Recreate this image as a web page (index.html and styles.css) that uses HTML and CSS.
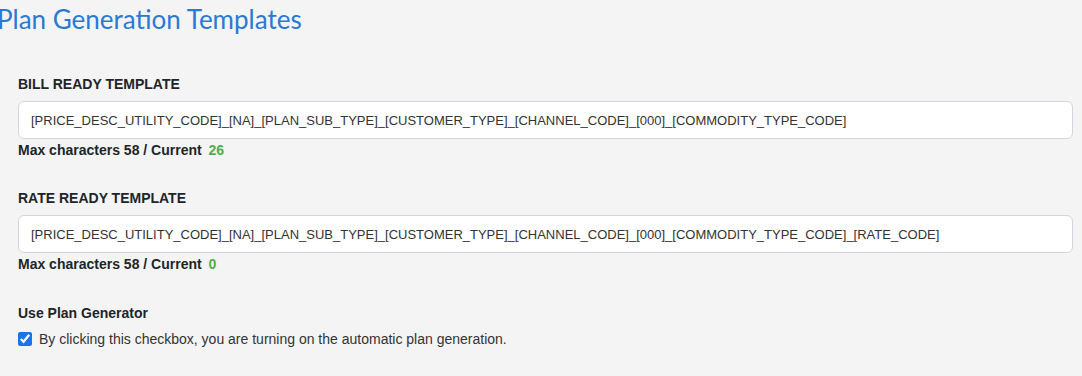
FILE: index.html
```html
<html>
<head>
<link rel="stylesheet" href="styles.css">
<meta http-equiv="Content-Type" content="text/html; charset=UTF-8">
<title>Plan Generation Templates</title>
</head>
<body>
	<div class="page">
		<h1 class="title">Plan Generation Templates</h1>

		<div class="field">
			<label class="caps">BILL READY TEMPLATE</label>
			<input class="tpl" type="text" value="[PRICE_DESC_UTILITY_CODE]_[NA]_[PLAN_SUB_TYPE]_[CUSTOMER_TYPE]_[CHANNEL_CODE]_[000]_[COMMODITY_TYPE_CODE]">
			<div class="count">Max characters 58 / Current <span class="num">26</span></div>
		</div>

		<div class="field second">
			<label class="caps">RATE READY TEMPLATE</label>
			<input class="tpl" type="text" value="[PRICE_DESC_UTILITY_CODE]_[NA]_[PLAN_SUB_TYPE]_[CUSTOMER_TYPE]_[CHANNEL_CODE]_[000]_[COMMODITY_TYPE_CODE]_[RATE_CODE]">
			<div class="count">Max characters 58 / Current <span class="num">0</span></div>
		</div>

		<div class="field last">
			<label class="caps plain">Use Plan Generator</label>
			<label class="check">
				<input type="checkbox" checked>
				<span>By clicking this checkbox, you are turning on the automatic plan generation.</span>
			</label>
		</div>
	</div>
</body>
</html>
```

FILE: styles.css
```css
body {
	margin:0;
	padding:0;
	background-color:#F4F4F4;
	font-family: "Liberation Sans", Arial, sans-serif;
	font-size:14px;
	color:#212529;
}

div.page {
	padding: 0 9px 0 18px;
}

h1.title {
	margin: 0 0 0 -21px;
	padding-top: 4px;
	font-family: Lato, "Noto Sans", sans-serif;
	font-weight: normal;
	font-size: 26px;
	color: #2A7AD3;
	height: 42px;
	line-height: 30px;
}

div.field {
	display: flex;
	flex-direction: column;
	padding-top: 30px;
}

div.second {
	padding-top: 32px;
}

div.last {
	padding-top: 33px;
}

label.caps {
	font-weight: bold;
	font-size: 14px;
	line-height: 16px;
	margin-bottom: 9px;
}

label.plain {
	margin-bottom: 10px;
}

input.tpl {
	font-family: "Liberation Sans", Arial, sans-serif;
	font-size: 13px;
	color: #333;
	height: 38px;
	padding: 0 12px;
	border: 1px solid #D2D5DB;
	border-radius: 6px;
	background: #FFFFFF;
	outline: none;
}

div.count {
	font-weight: bold;
	font-size: 14px;
	line-height: 16px;
	margin-top: 3px;
}

span.num {
	color: #4CAF50;
	margin-left: 3px;
}

label.check {
	display: flex;
	align-items: center;
	gap: 7px;
	font-size: 14px;
	color: #333;
}

label.check input {
	margin: 0;
	width: 14px;
	height: 14px;
	accent-color: #1A73E8;
}
```
